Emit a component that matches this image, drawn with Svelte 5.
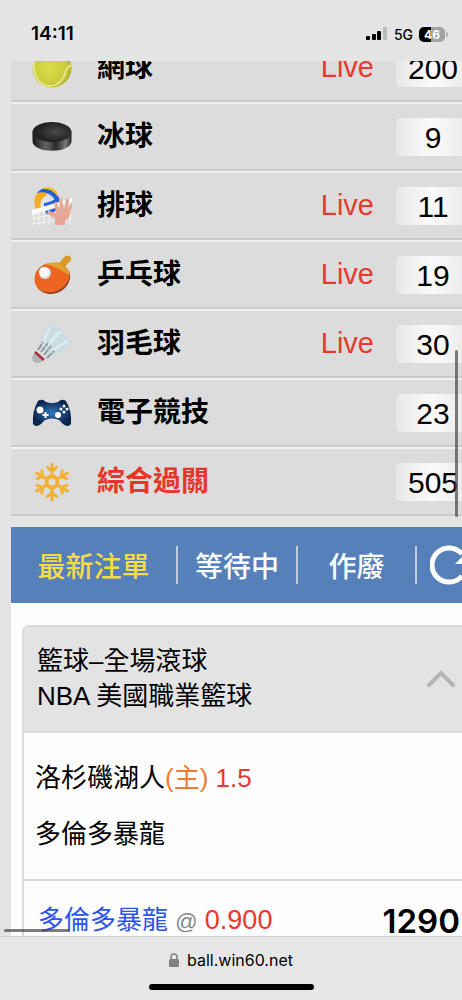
<script>
  const sports = [
    { id: 'tennis', name: '網球', live: true, count: 200 },
    { id: 'hockey', name: '冰球', live: false, count: 9 },
    { id: 'volleyball', name: '排球', live: true, count: 11 },
    { id: 'pingpong', name: '乒乓球', live: true, count: 19 },
    { id: 'badminton', name: '羽毛球', live: true, count: 30 },
    { id: 'esports', name: '電子競技', live: false, count: 23 },
    { id: 'parlay', name: '綜合過關', live: false, count: 505, hot: true }
  ];
  const tabs = ['最新注單', '等待中', '作廢'];
  let active = $state(0);
</script>

<div class="screen">
  <header class="status">
    <span class="time">14:11</span>
    <span class="signals">
      <svg width="22" height="14" viewBox="0 0 22 14" aria-hidden="true">
        <rect x="0" y="9" width="4" height="4" rx="1" />
        <rect x="6" y="7" width="4" height="6" rx="1" />
        <rect x="11" y="4" width="4" height="9" rx="1" />
        <rect x="17" y="0" width="4" height="13" rx="1" fill="#bbb" />
      </svg>
      <span class="net">5G</span>
      <span class="battery"><b>46</b></span>
    </span>
  </header>

  <main class="view">
    <div class="sheet">
      <ul class="sports">
        {#each sports as s (s.id)}
          <li>
            <a href="#{s.id}" class="row" class:hot={s.hot}>
              <svg class="icon" viewBox="0 0 40 40" aria-hidden="true">
                {#if s.id === 'tennis'}
                  <defs><radialGradient id="tg" cx=".45" cy=".5" r=".6"><stop offset="0" stop-color="#dcdd48" /><stop offset=".7" stop-color="#c9cb3c" /><stop offset="1" stop-color="#a3a630" /></radialGradient></defs>
                  <circle cx="20" cy="20" r="19.5" fill="url(#tg)" />
                  <path d="M2 20C4 42 28 44 33 25Q35 19 39 17M2 20Q1 5 18 1" fill="none" stroke="#ecec8a" stroke-width="1.6" />
                {:else if s.id === 'hockey'}
                  <defs>
                    <linearGradient id="ps"><stop offset="0" stop-color="#171717" /><stop offset=".35" stop-color="#646464" /><stop offset=".6" stop-color="#2a2a2a" /><stop offset=".85" stop-color="#777" /><stop offset="1" stop-color="#222" /></linearGradient>
                    <radialGradient id="pt" cx=".6" cy=".5"><stop offset="0" stop-color="#484848" /><stop offset="1" stop-color="#202020" /></radialGradient>
                  </defs>
                  <path d="M.5 15v9c0 13 39 13 39 0v-9z" fill="url(#ps)" />
                  <ellipse cx="20" cy="15" rx="19.5" ry="10" fill="url(#pt)" />
                {:else if s.id === 'volleyball'}
                  <path d="M4 24Q0 13 6 6q5-2 10 1l-2 3q-7 3-5 12z" fill="#f5ac28" />
                  <path d="M9 22Q7 13 14 10q5 1 7 6l-8 2v4z" fill="#dfe4ea" />
                  <path d="M5 7Q10 1 18 2q7 3 9 10l-4 2Q17 4 5 7z" fill="#2560ca" />
                  <path d="M13 1Q23 0 26 8v3Q20 2 11 3z" fill="#f5c22c" />
                  <path d="M12 17q7-1 11-4l-1-3 5 2q1 7-4 13-6 6-9 2l-2-5z" fill="#285fda" />
                  <path d="M0 24L40 12v5L0 29z" fill="#fbfbfb" />
                  <path d="M0 33L40 24M0 38L40 32M2 27v12M7 26v13M12 25v14M17 24v14M27 22v16M33 20v18M38 17v21" stroke="#f4f4f4" stroke-width="1" fill="none" />
                  <path d="M23 39v-7q-6-2-8-6 2-2 5 0l4 1-2-10q2-2 3 0l3 7-1-11q2-2 3 0l2 10 2-10q2-1 3 1l-1 10 3-7q2-1 2 1l-3 10q-1 5-5 7v4z" fill="#e6a796" />
                {:else if s.id === 'pingpong'}
                  <path d="M25 11l7-9q3-3 7 0v3l-9 10z" fill="#d8982a" />
                  <path d="M5 32C12 43 31 41 37 27q2-6 0-11L6 20z" fill="#8c4327" />
                  <path d="M3 20C6 9 18 6 29 9q10 4 8 14C33 37 15 41 7 34Q1 29 3 20z" fill="#ee6421" />
                  <path d="M13 9Q23 6 28 8l5 4 4 5v3Q25 12 13 9z" fill="#e0a22c" />
                  <circle cx="13" cy="18" r="6" fill="#d7dce1" /><circle cx="12" cy="17" r="5" fill="#fff" />
                {:else if s.id === 'badminton'}
                  <path d="M7 22L14 4l4-4 11 4 4 7 7 7-19 15-7-3z" fill="#c9dee3" />
                  <path d="M11 19L18 3M15 22L28 7M20 26L36 17" stroke="#dde9ec" stroke-width="3" />
                  <path d="M6 26l5-8M9 28l7-9M12 31l7-9M15 34l7-7" stroke="#92989b" stroke-width="2" />
                  <path d="M9 19l13 11" stroke="#dfe4e5" stroke-width="1" />
                  <path d="M3 28l9 7q-2 4-7 4-5-1-5-6z" fill="#b1b3b4" />
                  <path d="M3 28l9 8" stroke="#aa2e38" stroke-width="2.4" />
                {:else if s.id === 'esports'}
                  <defs><radialGradient id="gg"><stop offset="0" stop-color="#2f76ba" /><stop offset="1" stop-color="#0d244d" /></radialGradient></defs>
                  <path d="M6 8q4-3 8 1 6 2 12 0 4-4 8-1 6 10 5 23-3 4-8 0l-4-4q-7-3-14 0l-4 4q-5 4-8 0Q0 18 6 8z" fill="url(#gg)" />
                  <g fill="#fff"><circle cx="8" cy="17" r="3.5" /><circle cx="26" cy="22" r="3" /><path d="M12.500 19h2v2h2v2h-2v2h-2v-2h-2v-2h2z" /><circle cx="32" cy="13" r="1.500" /><circle cx="32" cy="19" r="1.500" /><circle cx="29" cy="16" r="1.500" /><circle cx="35" cy="16" r="1.500" /></g>
                {:else}
                  <g fill="none" stroke="#f2b134" stroke-width="3" stroke-linecap="round">
                    <circle cx="20" cy="20" r="5.500" stroke-width="4" />
                    {#each [0, 60, 120, 180, 240, 300] as a (a)}
                      <path d="M20 14V2M15.500 5.500l4.500 4 4.500-4" transform="rotate({a} 20 20)" />
                    {/each}
                  </g>
                {/if}
              </svg>
              <span class="name">{s.name}</span>
              {#if s.live}<span class="live">Live</span>{/if}
              <span class="count">{s.count}</span>
            </a>
          </li>
        {/each}
      </ul>

      <nav class="tabs">
        {#each tabs as t, i (t)}
          <button class:active={active === i} onclick={() => (active = i)}>{t}</button>
        {/each}
        <button class="refresh" aria-label="重新整理">
          <svg width="40" height="40" viewBox="0 0 40 40" aria-hidden="true">
            <path d="M32 9A17 17 0 1 0 32 31" fill="none" stroke="#fff" stroke-width="5" />
            <path d="M25 19L37 7v12z" fill="#fff" />
          </svg>
        </button>
      </nav>

      <section class="bets">
        <article class="card">
          <button class="head">
            <span>籃球–全場滾球<br />NBA 美國職業籃球</span>
            <svg width="30" height="18" viewBox="0 0 30 18" aria-hidden="true">
              <path d="M3 15L15 3l12 12" fill="none" stroke="#b4b4b4" stroke-width="4" stroke-linecap="round" />
            </svg>
          </button>
          <div class="match">
            <p>洛杉磯湖人<span class="home">(主)</span> <span class="red">1.5</span></p>
            <p>多倫多暴龍</p>
          </div>
          <div class="stake">
            <span><span class="pick">多倫多暴龍</span> <span class="at">@</span> <span class="red">0.900</span></span>
            <strong>1290</strong>
          </div>
        </article>
      </section>
    </div>
    <span class="bar-y"></span>
    <span class="bar-x"></span>
  </main>

  <footer class="address">
    <div class="url">
      <svg width="10" height="14" viewBox="0 0 10 14" aria-hidden="true">
        <rect x="0" y="6" width="10" height="8" rx="1.500" fill="#808084" />
        <path d="M2 7V4a3 3 0 0 1 6 0v3" fill="none" stroke="#808084" stroke-width="1.500" />
      </svg>
      <span>ball.win60.net</span>
    </div>
    <span class="home-bar"></span>
  </footer>
</div>

<style>
  :global(body) { margin: 0; background: #e4e4e4; }
  .screen {
    height: 100vh;
    display: flex;
    flex-direction: column;
    overflow: hidden;
    color: #000;
    background: #e4e4e4;
    font-family: "Liberation Sans", "Noto Sans CJK TC", sans-serif;
  }
  .status {
    box-sizing: border-box;
    height: 61px;
    flex: none;
    display: flex;
    justify-content: space-between;
    padding: 24px 14px 0 31px;
    font-family: Inter, sans-serif;
  }
  .time { font-size: 19px; line-height: 20px; font-weight: 600; }
  .signals { display: flex; align-items: center; gap: 6px; height: 20px; }
  .net { font-size: 14px; font-weight: 500; }
  .battery {
    position: relative;
    width: 26px;
    height: 15px;
    border-radius: 5px;
    background: linear-gradient(90deg, #000 46%, #a2a2a2 46%);
    color: #fff;
    font-size: 12px;
    line-height: 15px;
    text-align: center;
    margin-right: 3px;
  }
  .battery::after {
    content: "";
    position: absolute;
    right: -3px;
    top: 5px;
    width: 2px;
    height: 5px;
    border-radius: 0 2px 2px 0;
    background: #b0b0b0;
  }
  .view { position: relative; flex: 1; min-height: 0; overflow: hidden; }
  .sheet { margin: -28px -8px 0 11px; }
  ul { list-style: none; margin: 0; padding: 0; }
  .row {
    box-sizing: border-box;
    height: 69px;
    display: flex;
    align-items: center;
    padding-left: 21px;
    border-top: 2px solid #f1f1f1;
    border-bottom: 2px solid #cbcbcb;
    background: #dcdcdc;
    color: #000;
    text-decoration: none;
  }
  .icon { width: 40px; height: 40px; flex: none; }
  .name { flex: 1; margin-left: 25px; font-size: 28px; line-height: 40px; font-weight: 700; }
  .hot .name { color: #e8352a; }
  .live { color: #e8392e; font-size: 29px; line-height: 38px; margin: 0 22px 2px 0; }
  .count {
    width: 74px;
    height: 38px;
    border-radius: 5px;
    background: linear-gradient(90deg, #e8e8e8, #fafafa 50%, #e8e8e8);
    font-size: 30px;
    line-height: 40px;
    text-align: center;
  }
  .tabs {
    display: grid;
    grid-template-columns: 167fr 120fr 119fr 53fr;
    align-items: center;
    height: 76px;
    margin-top: 11px;
    background: #5580ba;
  }
  button { font: inherit; color: inherit; border: 0; background: none; padding: 0; margin: 0; }
  .tabs button {
    height: 38px;
    border-right: 2px solid #c0c9d6;
    color: #fff;
    font-size: 28px;
    line-height: 40px;
    padding-top: 2px;
    font-weight: 500;
  }
  .tabs .active { color: #f5dc47; }
  .tabs .refresh { display: flex; align-items: center; border: 0; padding: 0 0 0 13px; }
  .refresh svg { flex: none; }
  .bets { background: #fdfdfd; padding: 22px 0 40px 11px; }
  .card { border: 2px solid #dadada; border-radius: 7px; overflow: hidden; font-size: 26px; }
  .head {
    box-sizing: border-box;
    width: 100%;
    height: 106px;
    display: flex;
    align-items: center;
    justify-content: space-between;
    padding: 0 12px 0 13px;
    border-bottom: 2px solid #dadada;
    background: #e3e3e3;
    text-align: left;
    line-height: 35px;
  }
  .match { padding: 17px 11px; border-bottom: 2px solid #dadada; }
  p { margin: 0; line-height: 56px; }
  .home { color: #ee7d31; }
  .red { color: #e8392e; }
  .stake { display: flex; align-items: center; justify-content: space-between; padding: 11px 8px 10px 14px; line-height: 56px; }
  .stake .red { font-size: 27px; }
  .pick { color: #2d54ee; }
  .at { color: #888; font-size: 22px; }
  strong { font-family: Inter, sans-serif; font-weight: 600; font-size: 33px; }
  .bar-y, .bar-x { position: absolute; border-radius: 2px; background: rgba(70, 70, 70, 0.7); }
  .bar-y { right: 4px; top: 289px; width: 3px; height: 167px; }
  .bar-x { left: 4px; bottom: 4px; width: 66px; height: 3px; }
  .address {
    box-sizing: border-box;
    height: 64px;
    flex: none;
    display: flex;
    flex-direction: column;
    align-items: center;
    justify-content: space-between;
    padding: 13px 0 10px;
    border-top: 1px solid #cfcfcf;
    background: #e6e6e6;
  }
  .url { display: flex; align-items: center; gap: 8px; font: 16px/20px Inter, sans-serif; }
  .home-bar { width: 165px; height: 6px; border-radius: 3px; background: #000; }
</style>
